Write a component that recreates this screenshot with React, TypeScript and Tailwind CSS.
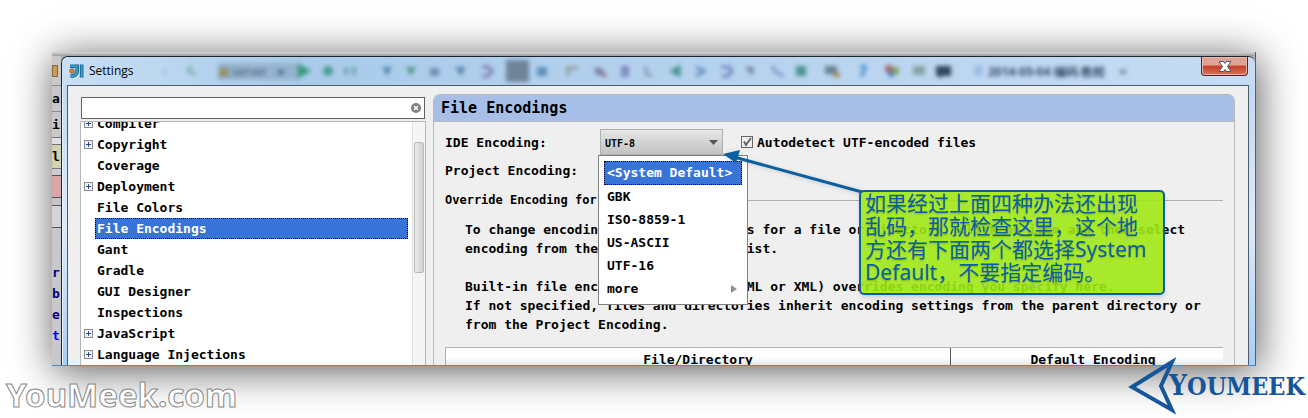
import React from "react";

const MONO = "font-['DejaVu_Sans_Mono','Liberation_Mono',monospace] font-bold";

type TreeItem = { label: string; expandable?: boolean; selected?: boolean };

const TREE: TreeItem[] = [
  { label: "Compiler", expandable: true },
  { label: "Copyright", expandable: true },
  { label: "Coverage" },
  { label: "Deployment", expandable: true },
  { label: "File Colors" },
  { label: "File Encodings", selected: true },
  { label: "Gant" },
  { label: "Gradle" },
  { label: "GUI Designer" },
  { label: "Inspections" },
  { label: "JavaScript", expandable: true },
  { label: "Language Injections", expandable: true },
];

const ENCODINGS = ["<System Default>", "GBK", "ISO-8859-1", "US-ASCII", "UTF-16"];

function AppIcon() {
  return (
    <svg width="15" height="14" viewBox="0 0 15 14" aria-hidden="true">
      <path d="M1 2.200h7.200v4.600c0 3-1.700 4.700-4.200 5.200H1.500" fill="none" stroke="#1c5a86" strokeWidth="3.600" />
      <path d="M1 2.200h7.200v4.600c0 3-1.700 4.700-4.200 5.200H1.500" fill="none" stroke="#35a0d0" strokeWidth="2" />
      <path d="M12.700 .5v13" stroke="#1c5a86" strokeWidth="3.600" />
      <path d="M12.700 1v12" stroke="#35a0d0" strokeWidth="2" />
      <circle cx="3" cy="7" r="2.300" fill="#d98a2b" stroke="#7a4a14" strokeWidth=".7" />
    </svg>
  );
}

function BlurredToolbar() {
  return (
    <div className="flex min-w-0 flex-1 overflow-hidden pl-2">
      <svg className="shrink-0" width="1000" height="28" viewBox="0 0 1000 28" aria-hidden="true">
        <defs>
          <filter id="soft" x="-20%" y="-50%" width="140%" height="200%">
            <feGaussianBlur stdDeviation="2" />
          </filter>
        </defs>
        <g filter="url(#soft)" fill="none" strokeWidth="3">
          <path d="M20 15h6" stroke="#9dbcd6" />
          <path d="M50 9l-4 5 8 4" stroke="#7fb0a8" />
          <path d="M76 6h82v17H76z" fill="#94b3d0" />
          <path d="M78 10h9v10H76z" fill="#8f9468" />
          <text x="90" y="19" fontSize="12" fill="#38475a" stroke="none">server</text>
          <path d="M136 13l3 4 3-4" stroke="#50647c" />
          <path d="M157 9v10l9-5z" fill="#2f9a78" stroke="#2f9a78" />
          <circle cx="186" cy="14" r="5" fill="#4a9c8c" />
          <path d="M206 11l-3 3 3 3M212 10v8" stroke="#5e9c9c" />
          <path d="M240 10h10l-5 9z" fill="#5787b0" />
          <path d="M264 10h10l-5 9z" fill="#519787" />
          <path d="M288 11h9v8h-9z" fill="#6d8fb4" />
          <path d="M313 10h11l-5 9z" fill="#5787b0" />
          <path d="M340 10h6l4 4-4 5h-6" stroke="#7778b0" />
          <path d="M364 3h23v22h-23z" fill="#6f8399" />
          <path d="M395 10h10v9h-10z" fill="#5f8fba" />
          <path d="M426 9v10M428 11h8" stroke="#8d9b92" />
          <path d="M452 11h8l3 7h-9z" fill="#77809c" />
          <circle cx="462" cy="18" r="2" fill="#9a4668" />
          <path d="M479 9h8v11h-8z" fill="#8388c0" />
          <path d="M504 9v8l6 2" stroke="#8299b5" />
          <path d="M530 14l7-4v8z" fill="#44938f" stroke="#44938f" />
          <path d="M554 10l8 4-8 5" stroke="#5d8cbd" />
          <path d="M579 10h8l3 4-4 5h-6" stroke="#6b83bb" />
          <path d="M603 10h9l-2 9z" fill="#75839b" />
          <path d="M630 9l4 6 8 4" stroke="#8190c7" />
          <path d="M654 9h10v10h-10z" fill="#4c9490" />
          <path d="M683 9h12v8h-12z" fill="#667f92" />
          <path d="M691 16h7v4h-7z" fill="#a68851" />
          <path d="M718 10q6-3 5 3l-3 3v4" stroke="#478fcc" />
          <circle cx="747" cy="12" r="4" fill="#a65e69" />
          <circle cx="753" cy="14" r="4" fill="#80a04c" />
          <circle cx="749" cy="17" r="3" fill="#4778b9" />
          <path d="M771 9h12v9h-12z" fill="#86a3a0" />
          <path d="M794 9h15v10h-9l-3 3v-3h-3z" fill="#30465f" />
          <path d="M832 8h9v11h-9z" fill="#9dbfe6" />
          <text x="846" y="19" fontSize="12" fontWeight="bold" fill="#334b66" stroke="none">2014-05-04 编码 教程</text>
          <path d="M978 13l3 3 3-3" stroke="#7089a4" />
        </g>
      </svg>
    </div>
  );
}

function Expander() {
  return (
    <svg width="9" height="9" viewBox="0 0 9 9" aria-hidden="true">
      <rect x=".5" y=".5" width="8" height="8" fill="#f4f4f4" stroke="#8c8c8c" />
      <path d="M2 4.500h5M4.500 2v5" stroke="#29478f" />
    </svg>
  );
}

function EditorSliver() {
  return (
    <div className={`flex w-[9px] shrink-0 flex-col overflow-hidden bg-[#c8c8c8] text-[13px] leading-5 text-black ${MONO}`} aria-hidden="true">
      <div className="flex h-[30px] items-center border-b border-[#8c8c8c]">
        <span className="h-3 w-[6px] border border-[#7f6a45] bg-[#d29a4d]" />
      </div>
      <div className="flex h-[26px] items-center border-b border-[#8c8c8c]">a</div>
      <div className="flex h-[26px] items-center border-b border-[#777]">i</div>
      <div className="h-[7px] border-b border-[#777] bg-[#e0e0e0]" />
      <div className="flex h-[24px] items-center border-b border-[#777] bg-[#d2d2ae]">l</div>
      <div className="h-[7px] border-b border-[#555] bg-[#ccc]" />
      <div className="h-[22px] border-b border-[#555] bg-[#d9a6a6]" />
      <div className="h-[8px] border-b border-[#555] bg-[#c4c4c4]" />
      <div className="h-[22px] border-b border-[#555] bg-[#d4d4d4]" />
      <div className="flex-1 bg-[#c8c8c8] pt-[34px] leading-[21px] text-[#000080]">
        <div>r</div>
        <div>b</div>
        <div>e</div>
        <div className="text-[#0000ff]">t</div>
      </div>
    </div>
  );
}

function SettingsTree() {
  return (
    <div className="flex w-[346px] shrink-0 flex-col pt-[11px]">
      <div className="mx-px flex h-[22px] shrink-0 items-center border border-[#5c6068] bg-white pr-[3px]">
        <input aria-label="Search settings" className="min-w-0 flex-1 bg-transparent px-1 text-[13px] outline-none" />
        <button aria-label="Clear search" className="shrink-0">
          <svg width="10" height="10" viewBox="0 0 10 10">
            <circle cx="5" cy="5" r="5" fill="#808080" />
            <path d="M3 3l4 4M7 3l-4 4" stroke="#fff" strokeWidth="1.400" />
          </svg>
        </button>
      </div>
      <div className="mt-[2px] flex min-h-0 flex-1 overflow-hidden border-x border-t border-[#b8b8b8] bg-white">
        <ul className={`-mt-[9px] min-w-0 flex-1 text-[13px] leading-[21px] ${MONO}`}>
          {TREE.map((item) => (
            <li key={item.label} className="flex h-[21px] items-center pl-[3px] pr-1">
              <span className="w-[11px] shrink-0">{item.expandable && <Expander />}</span>
              <button
                className={
                  item.selected
                    ? "h-[21px] flex-1 border border-dotted border-black bg-[#3874d8] pl-px text-left leading-[19px] text-white"
                    : "h-[21px] flex-1 pl-[2px] text-left text-black"
                }
              >
                {item.label}
              </button>
            </li>
          ))}
        </ul>
        <div className="w-[13px] shrink-0 border-l border-[#e2e2e2] bg-[#f5f5f5] px-px pt-[20px]">
          <div className="h-[131px] rounded-[2px] border border-[#b9b9b9] bg-linear-to-r from-[#ececec] to-[#cfcfcf]" />
        </div>
      </div>
    </div>
  );
}

function EncodingMenu() {
  return (
    <div className="absolute -left-[2px] top-[26px] z-10 w-[150px] border border-[#808080] bg-white px-[5px] pb-[4px] pt-[5px]">
      <ul className="text-[13px] leading-[23px]">
        {ENCODINGS.map((name, i) => (
          <li key={name}>
            <button
              className={
                i === 0
                  ? "block h-[24px] w-[138px] border border-dotted border-black bg-[#3874d8] pl-[2px] text-left leading-[22px] text-white"
                  : "block h-[23px] w-full pl-[3px] text-left"
              }
            >
              {name}
            </button>
          </li>
        ))}
        <li>
          <button className="flex h-[23px] w-full items-center justify-between pl-[3px] pr-[5px]">
            more
            <svg width="6" height="8" viewBox="0 0 6 8" aria-hidden="true">
              <path d="M0 0l6 4-6 4z" fill="#909090" />
            </svg>
          </button>
        </li>
      </ul>
    </div>
  );
}

function Callout() {
  return (
    <>
      <svg className="pointer-events-none absolute left-[288px] top-[54px] z-20 drop-shadow-sm" width="142" height="46" viewBox="0 0 142 46" aria-hidden="true">
        <path d="M12 8l128 35" stroke="#0a5fa0" strokeWidth="3" />
        <path d="M1 5l17-4-4 13z" fill="#0a5fa0" />
      </svg>
      <p className="absolute left-[425px] top-[95px] z-20 w-[306px] rounded-[5px] border-2 border-[#0a5fa0] bg-[#a0e815]/90 pb-[9px] pl-[4px] font-['Noto_Sans','Noto_Sans_CJK_SC',sans-serif] text-[21px] font-normal leading-[23px] text-[#0a5fa0] shadow-md text-shadow-sm">
        如果经过上面四种办法还出现
        <br />
        乱码，那就检查这里，这个地
        <br />
        方还有下面两个都选择System
        <br />
        Default，不要指定编码。
      </p>
    </>
  );
}

function EncodingsPane() {
  return (
    <section className={`relative mt-[8px] flex min-w-0 flex-1 flex-col rounded-t-[7px] border-x border-t border-[#b8b8b8] text-[13px] text-black ${MONO}`}>
      <h1 className="h-[27px] shrink-0 rounded-t-[6px] border-b border-[#b8b8b8] bg-[#a7bfe6] pl-[7px] text-[15px] leading-[27px]">
        File Encodings
      </h1>
      <div className="px-[11px] pt-[7px]">
        <div className="flex h-[26px] items-center">
          <label htmlFor="ide" className="w-[155px] shrink-0 pt-[2px]">
            IDE Encoding:
          </label>
          <div className="relative h-[26px] w-[123px] shrink-0">
            <select
              id="ide"
              defaultValue="UTF-8"
              className="h-full w-full appearance-none border border-[#b0b0b0] bg-linear-to-b from-[#e6e6e6] to-[#c2c2c2] pl-1 pt-[3px] text-[10px] outline-none"
            >
              <option>UTF-8</option>
            </select>
            <svg className="pointer-events-none absolute right-[5px] top-[11px]" width="9" height="5" viewBox="0 0 9 5" aria-hidden="true">
              <path d="M0 0h9L4.500 5z" fill="#555" />
            </svg>
            <EncodingMenu />
          </div>
          <label className="ml-[18px] flex items-center gap-1 whitespace-nowrap pt-[2px]">
            <span className="relative -mt-[2px] h-3 w-3">
              <input type="checkbox" defaultChecked className="block h-3 w-3 appearance-none border border-[#666] bg-[#eee]" />
              <svg className="pointer-events-none absolute inset-0" width="12" height="12" viewBox="0 0 12 12" aria-hidden="true">
                <path d="M3 5.500L5 9l5-7" fill="none" stroke="#666" strokeWidth="2" />
              </svg>
            </span>
            Autodetect UTF-encoded files
          </label>
        </div>
        <div className="mt-[3px] flex h-[26px] items-center">Project Encoding:</div>
        <div className="mt-[7px] flex h-[18px] items-center gap-2 text-[12px]">
          <h2 className="whitespace-nowrap">Override Encoding for files</h2>
          <span className="h-px flex-1 bg-[#b0b0b0]" />
        </div>
        <div className="ml-[20px] mt-[11px] whitespace-nowrap leading-[19px]">
          <p>
            To change encoding IntelliJ IDEA uses for a file or directory, click an item and then select
            <br />
            encoding from the Default Encoding list.
          </p>
          <p className="mt-[19px]">
            Built-in file encoding (e.g. JSP, HTML or XML) overrides encoding you specify here.
            <br />
            If not specified, files and directories inherit encoding settings from the parent directory or
            <br />
            from the Project Encoding.
          </p>
        </div>
        <table className="mt-[13px] w-full border-separate border-spacing-0 border-l border-t border-[#b0b0b0]">
          <thead>
            <tr className="h-[24px] bg-linear-to-b from-white from-40% to-[#d0d0d0]">
              <th className="w-[65%] border-r border-[#555] p-0 leading-[22px]">File/Directory</th>
              <th className="p-0 pl-[12px] leading-[22px]">Default Encoding</th>
            </tr>
          </thead>
        </table>
      </div>
      <Callout />
    </section>
  );
}

export default function App() {
  return (
    <main className="relative flex h-screen min-w-[900px] flex-col overflow-hidden bg-white">
      <div className="mx-[52px] mt-[52px] flex min-h-0 flex-1 flex-col border-b border-r border-b-[#4a90c8] border-r-[#1f6fa8] bg-[#a8a8a8] shadow-[2px_5px_38px_rgba(0,0,0,0.65)]">
        <div className="h-[4px] shrink-0 bg-linear-to-b from-[#d8d8d8] to-[#9c9c9c]" />
        <div className="flex min-h-0 flex-1">
          <EditorSliver />
          <div className="flex min-w-0 flex-1 flex-col overflow-hidden rounded-t-[7px] border-l border-t border-[#1c2630] bg-[#b4d2f0] bg-linear-to-b from-[#bcd6f0] via-[#dceaf8] via-55% to-[#a9cdf3] shadow-[inset_1px_1px_0_#e8f4ff]">
            <header className="flex h-[28px] shrink-0 items-center bg-linear-to-r from-[#c9dff4] via-[#a9cbea] via-20% to-[#c6dcf4] pl-[7px]">
              <AppIcon />
              <span className="ml-[5px] font-['Open_Sans','Noto_Sans',sans-serif] text-[12px] text-black">Settings</span>
              <BlurredToolbar />
              <button
                aria-label="Close"
                className="mr-[7px] flex h-[19px] w-[47px] shrink-0 items-center justify-center self-start rounded-b-[4px] border border-t-0 border-[#5a2222] bg-linear-to-b from-[#e0a294] from-45% via-[#c33b28] via-50% to-[#dc7258] shadow-[inset_0_0_0_1px_#f0b8ac]"
              >
                <svg width="12" height="11" viewBox="0 0 12 11" aria-hidden="true">
                  <path d="M0 .5h4.500L6 2.500 7.500 .5H12L8.500 5.500 12 10.500H7.500L6 8.500 4.500 10.500H0L3.500 5.500z" fill="#fff" stroke="#4e5565" strokeWidth="1" />
                </svg>
              </button>
            </header>
            <div className="ml-[5px] mr-[6px] flex min-h-0 flex-1 gap-[7px] overflow-hidden border-x border-t border-[#4d5c6c] bg-[#efefef] pl-[12px] pr-[13px]">
              <SettingsTree />
              <EncodingsPane />
            </div>
          </div>
        </div>
      </div>
      <footer className="relative flex h-[52px] shrink-0 items-end justify-between pl-[6px] pr-[3px]">
        <span className="font-['Noto_Sans','Open_Sans',sans-serif] text-[33px] font-bold leading-[46px] text-white [-webkit-text-stroke:1px_#888]">
          YouMeek.com
        </span>
        <a href="#youmeek" className="absolute bottom-[2px] right-[3px] flex items-center text-[#15559a]">
          <svg width="50" height="60" viewBox="0 0 50 60" aria-hidden="true">
            <path d="M46 6L6 31l40 23L35 30z" fill="none" stroke="#15559a" strokeWidth="4" strokeMiterlimit="10" />
          </svg>
          <span className="-ml-[7px] font-['DejaVu_Serif_Condensed','DejaVu_Serif',serif] text-[25px] font-bold leading-8">
            <span className="text-[28px]">Y</span>OUMEEK
          </span>
        </a>
      </footer>
    </main>
  );
}
